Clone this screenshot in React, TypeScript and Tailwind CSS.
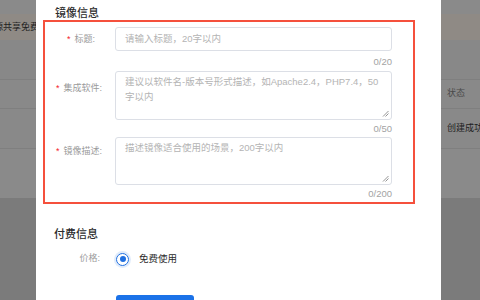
import React from "react";

function Resize() {
  return (
    <svg className="absolute right-[2px] bottom-[2px]" width="7" height="7" viewBox="0 0 7 7">
      <path d="M1 6.5 L6.5 1 M3.5 6.5 L6.5 3.5" stroke="#888" strokeWidth="0.9" />
    </svg>
  );
}

function Side({ variant }: { variant: "left" | "right" }) {
  return (
    <div className="flex flex-col h-full">
      <div className="h-[14px] bg-[#8a8a8a]" />
      <div className="h-[26px] bg-[#8f8a85] flex items-center overflow-hidden">
        {variant === "left" ? (
          <span className="ml-[-6px] text-[9px] leading-[12px] text-[#1e1e1e] whitespace-nowrap">源共享免费</span>
        ) : null}
      </div>
      <div className="h-[40px] bg-[#888888] border-b border-[#7f7f7f]" />
      <div className="h-[29px] bg-[#898989] border-b border-[#7f7f7f] flex items-center overflow-hidden">
        {variant === "right" ? (
          <span className="ml-[6px] text-[9px] text-[#4a4a4a] whitespace-nowrap">状态</span>
        ) : null}
      </div>
      <div className="h-[40px] bg-[#898989] border-b border-[#7f7f7f] flex items-center overflow-hidden">
        {variant === "right" ? (
          <span className="ml-[6px] text-[9px] text-[#1e1e1e] whitespace-nowrap">创建成功</span>
        ) : null}
      </div>
      <div className="h-[49px] bg-[#8a8a8a]" />
      <div className="flex-1 bg-[#7b7b7b]" />
    </div>
  );
}

function Label({ text, className }: { text: string; className?: string }) {
  return (
    <div className={"w-[57px] mr-[13px] flex justify-end text-[9px] leading-[14px] text-[#9a9a9a] whitespace-nowrap " + (className ?? "")}>
      <span className="text-[#f5222d] mr-[4px]">*</span>
      <span>{text}:</span>
    </div>
  );
}

function Counter({ text, className }: { text: string; className?: string }) {
  return (
    <div className={"pl-[70px] flex justify-end text-[9.5px] leading-[14px] text-[#a3a3a3] " + (className ?? "")}>
      {text}
    </div>
  );
}

export default function App() {
  return (
    <div className="w-[480px] h-[300px] flex overflow-hidden font-['Liberation_Sans','Noto_Sans_CJK_SC',sans-serif]">
      <div className="w-[36px] h-full shrink-0">
        <Side variant="left" />
      </div>
      <div className="w-[405px] h-full shrink-0 bg-white flex flex-col">
        <div className="pt-[6px] pl-[19px] text-[11px] leading-[14px] font-medium text-[#2b2b2b]">镜像信息</div>
        <div className="ml-[7px] w-[372px] border-2 border-[#f5503c] pr-[21px] pt-[5px] pb-[1px]">
          <div className="flex items-center">
            <Label text="标题" className="pr-[7px]" />
            <div className="w-[277px] h-[24px] border border-[#dcdfe6] rounded-[3px] flex items-center pl-[9px] text-[9.5px] text-[#b4b4b4]">
              请输入标题，20字以内
            </div>
          </div>
          <Counter text="0/20" className="mt-[4px]" />
          <div className="flex items-start mt-[2px]">
            <Label text="集成软件" className="pt-[10px]" />
            <div className="relative w-[277px] h-[49px] border border-[#dcdfe6] rounded-[3px] pl-[9px] pt-[2px] text-[9.5px] leading-[15px] text-[#b4b4b4]">
              <div className="whitespace-nowrap">建议以软件名-版本号形式描述，如Apache2.4，PHP7.4，50</div>
              <div>字以内</div>
              <Resize />
            </div>
          </div>
          <Counter text="0/50" className="mt-[2px]" />
          <div className="flex items-start mt-[1px]">
            <Label text="镜像描述" className="pt-[7px]" />
            <div className="relative w-[277px] h-[48px] border border-[#dcdfe6] rounded-[3px] pl-[9px] pt-[2px] text-[9.5px] leading-[15px] text-[#b4b4b4]">
              <div className="whitespace-nowrap">描述镜像适合使用的场景，200字以内</div>
              <Resize />
            </div>
          </div>
          <Counter text="0/200" className="mt-[2px]" />
        </div>
        <div className="ml-[7px] w-[379px] h-px bg-[#ececec] mt-[2px]" />
        <div className="mt-[21px] pl-[18px] text-[11px] leading-[14px] font-medium text-[#2b2b2b]">付费信息</div>
        <div className="mt-[11px] flex items-center h-[14px]">
          <div className="w-[64px] text-right text-[9px] text-[#9a9a9a] whitespace-nowrap">价格:</div>
          <div className="ml-[16px] w-[13px] h-[13px] rounded-full border-[1.5px] border-[#1f6fe0] ring-2 ring-[#e1ecfb] flex items-center justify-center">
            <div className="w-[6px] h-[6px] rounded-full bg-[#1f6fe0]" />
          </div>
          <div className="ml-[10px] text-[9.5px] text-[#2b2b2b] whitespace-nowrap">免费使用</div>
        </div>
        <div className="mt-[29px] ml-[80px] w-[78px] h-[30px] shrink-0 rounded-[3px] bg-[#1b72e8]" />
      </div>
      <div className="flex-1 h-full overflow-hidden">
        <Side variant="right" />
      </div>
    </div>
  );
}
